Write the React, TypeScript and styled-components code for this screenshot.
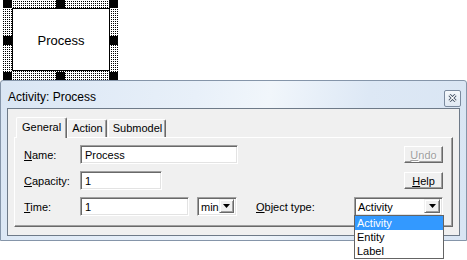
import React from 'react';
import styled, { createGlobalStyle } from 'styled-components';

const GlobalStyle = createGlobalStyle`
  html {
    overflow: hidden;
  }
  body {
    margin: 0;
    padding: 0;
    background: #fff;
    font-family: "Liberation Sans", Arial, sans-serif;
    font-size: 11px;
    color: #000;
  }
  #root {
    min-height: 260px;
  }
`;

const App: () => React.ReactElement = () => (
  <>
    <GlobalStyle />
    <Canvas>
      <Node>
        <NodeBox>Process</NodeBox>
        <Handle $x="left" $y="top" />
        <Handle $x="center" $y="top" />
        <Handle $x="right" $y="top" />
        <Handle $x="left" $y="middle" />
        <Handle $x="right" $y="middle" />
        <Handle $x="left" $y="bottom" />
        <Handle $x="center" $y="bottom" />
        <Handle $x="right" $y="bottom" />
      </Node>
    </Canvas>

    <Dialog>
      <TitleBar>
        <Title>Activity: Process</Title>
        <CloseButton>
          <svg width="9" height="8" viewBox="0 0 9 8">
            <path d="M1.5 1 L7.5 7 M7.5 1 L1.5 7" stroke="#3b4a5e" strokeWidth="3" />
            <path d="M1.5 1 L7.5 7 M7.5 1 L1.5 7" stroke="#fff" strokeWidth="1.2" />
          </svg>
        </CloseButton>
      </TitleBar>

      <Client>
        <Tabs>
          <TabStrip>
            <Tab $active>General</Tab>
            <Tab>Action</Tab>
            <Tab>Submodel</Tab>
          </TabStrip>
          <Panel>
            <Form>
              <Label><u>N</u>ame:</Label>
              <TextBox $span={3}>Process</TextBox>
              <ButtonCell>
                <Button disabled><u>U</u>ndo</Button>
              </ButtonCell>

              <Label><u>C</u>apacity:</Label>
              <TextBox $width={82}>1</TextBox>
              <Spacer $span={2} />
              <ButtonCell>
                <Button><u>H</u>elp</Button>
              </ButtonCell>

              <Label><u>T</u>ime:</Label>
              <TimeRow>
                <TextBox $width={110}>1</TextBox>
                <Combo $width={40}>
                  <ComboText>min</ComboText>
                  <Arrow />
                </Combo>
              </TimeRow>
              <Spacer />
              <Label><u>O</u>bject type:</Label>
              <Combo $width={89}>
                <ComboText>Activity</ComboText>
                <Arrow />
                <DropList>
                  <Option $selected>Activity</Option>
                  <Option>Entity</Option>
                  <Option>Label</Option>
                </DropList>
              </Combo>
            </Form>
          </Panel>
        </Tabs>
      </Client>
    </Dialog>
  </>
);

const Arrow = () => (
  <ArrowButton>
    <svg width="7" height="4" viewBox="0 0 7 4">
      <path d="M0 0 H7 L3.5 4 Z" fill="#000" />
    </svg>
  </ArrowButton>
);

export default App;

const Canvas = styled.div`
  position: relative;
  height: 80px;
  overflow: hidden;
`;

// dotted selection band: one black pixel per 2x2 cell
const Node = styled.div`
  position: absolute;
  left: 3px;
  top: -1px;
  width: 115px;
  height: 81px;
  box-sizing: border-box;
  padding: 9px 8px 9px 9px;
  background:
    linear-gradient(90deg, transparent 1px, #fff 1px) 0 0 / 2px 2px,
    linear-gradient(#000 1px, #fff 1px) 0 0 / 2px 2px;
`;

const NodeBox = styled.div`
  width: 100%;
  height: 100%;
  box-sizing: border-box;
  border: 1px solid #000;
  background: #fff;
  display: flex;
  align-items: center;
  justify-content: center;
  font-size: 13px;
  padding-top: 2px;
`;

const Handle = styled.div<{ $x: 'left' | 'center' | 'right'; $y: 'top' | 'middle' | 'bottom' }>`
  position: absolute;
  width: 9px;
  height: 9px;
  background: #000;
  left: ${({ $x }) => ($x === 'left' ? '0' : $x === 'center' ? '53px' : '106px')};
  top: ${({ $y }) => ($y === 'top' ? '0' : $y === 'middle' ? '37px' : '73px')};
`;

const Dialog = styled.div`
  width: 467px;
  box-sizing: border-box;
  border: 1px solid #8595a9;
  border-radius: 3px 3px 0 0;
  background: linear-gradient(100deg, #dae6f4 0%, #e8f0f9 40%, #f1f6fb 55%, #dde8f5 75%, #d9e5f3 100%);
  padding-bottom: 4px;
`;

const TitleBar = styled.div`
  height: 27px;
  display: flex;
  align-items: center;
  justify-content: space-between;
  padding: 0 5px 0 7px;
`;

const Title = styled.span`
  font-size: 12px;
  color: #000;
  margin-top: 4px;
`;

const CloseButton = styled.div`
  width: 17px;
  height: 17px;
  box-sizing: border-box;
  border: 1px solid #7b8a9e;
  border-radius: 2px;
  background: linear-gradient(#f6f9fc, #dfe8f2);
  display: flex;
  align-items: center;
  justify-content: center;
  margin-top: 7px;
`;

const Client = styled.div`
  margin: 0 6px;
  height: 128px;
  box-sizing: border-box;
  border: 1px solid #6e7a88;
  background: #f0f0f0;
  padding: 8px 6px 0 6px;
`;

const Tabs = styled.div`
  display: flex;
  flex-direction: column;
`;

const TabStrip = styled.div`
  height: 20px;
  display: flex;
  align-items: flex-end;
  padding-left: 4px;
`;

const Tab = styled.div<{ $active?: boolean }>`
  position: relative;
  box-sizing: border-box;
  height: ${({ $active }) => ($active ? '21px' : '18px')};
  margin: ${({ $active }) => ($active ? '0 -1px -1px -2px' : '0 0 0 1px')};
  padding: ${({ $active }) => ($active ? '3px 5px 0 5px' : '2px 3px 0 4px')};
  z-index: ${({ $active }) => ($active ? 1 : 0)};
  background: #f0f0f0;
  border-top: 1px solid #fff;
  border-left: 1px solid #fff;
  border-right: 1px solid #696969;
  box-shadow: inset -1px 0 #a0a0a0;
  border-radius: 2px 2px 0 0;
  font-size: 11px;
`;

const Panel = styled.div`
  height: 90px;
  box-sizing: border-box;
  border: 1px solid;
  border-color: #fff #696969 #696969 #fff;
  box-shadow: inset -1px -1px #a0a0a0;
  padding: 7px 0 0 9px;
`;

const Form = styled.div`
  display: grid;
  grid-template-columns: 56px 157px 19px 98px 89px;
  grid-auto-rows: 18px;
  row-gap: 8px;
  align-items: center;
`;

const Label = styled.span`
  font-size: 11px;
  white-space: nowrap;
  padding-top: 1px;
`;

const Spacer = styled.span<{ $span?: number }>`
  grid-column: span ${({ $span }) => $span ?? 1};
`;

const TextBox = styled.div<{ $width?: number; $span?: number }>`
  grid-column: span ${({ $span }) => $span ?? 1};
  width: ${({ $width, $span }) => ($width ? `${$width}px` : $span && $span > 1 ? '158px' : '100%')};
  height: 19px;
  box-sizing: border-box;
  border: 1px solid;
  border-color: #a0a0a0 #fff #fff #a0a0a0;
  box-shadow: inset 1px 1px #696969, inset -1px -1px #e3e3e3;
  background: #fff;
  padding: 3px 0 0 4px;
  font-size: 11px;
  white-space: nowrap;
`;

const ButtonCell = styled.div`
  display: flex;
  justify-content: flex-end;
  align-self: end;
`;

const Button = styled.button`
  width: 39px;
  height: 17px;
  box-sizing: border-box;
  padding: 0;
  margin: 0;
  font-family: "Liberation Sans", Arial, sans-serif;
  font-size: 11px;
  color: #000;
  background: #f0f0f0;
  border: 1px solid;
  border-color: #fff #696969 #696969 #fff;
  box-shadow: inset -1px -1px #a0a0a0;
  &:disabled {
    color: #a0a0a0;
    text-shadow: 1px 1px #fff;
  }
`;

const TimeRow = styled.div`
  display: flex;
  align-items: center;
  gap: 8px;
`;

const Combo = styled.div<{ $width: number }>`
  position: relative;
  width: ${({ $width }) => $width}px;
  height: 19px;
  box-sizing: border-box;
  border: 1px solid;
  border-color: #a0a0a0 #fff #fff #a0a0a0;
  box-shadow: inset 1px 1px #696969, inset -1px -1px #e3e3e3;
  background: #fff;
  display: flex;
  align-items: center;
  justify-content: space-between;
  padding: 2px 2px 2px 3px;
`;

const ComboText = styled.span`
  font-size: 11px;
  padding-top: 1px;
`;

const ArrowButton = styled.div`
  width: 16px;
  height: 14px;
  box-sizing: border-box;
  background: #f0f0f0;
  border: 1px solid;
  border-color: #f0f0f0 #696969 #696969 #f0f0f0;
  box-shadow: inset 1px 1px #fff, inset -1px -1px #a0a0a0;
  display: flex;
  align-items: center;
  justify-content: center;
`;

const DropList = styled.div`
  position: absolute;
  left: -1px;
  top: 17px;
  width: 90px;
  box-sizing: border-box;
  border: 1px solid #646464;
  background: #fff;
  z-index: 5;
`;

const Option = styled.div<{ $selected?: boolean }>`
  height: 14px;
  line-height: 14px;
  padding-left: 2px;
  font-size: 11px;
  color: ${({ $selected }) => ($selected ? '#fff' : '#000')};
  background: ${({ $selected }) => ($selected ? '#3399ff' : '#fff')};
`;
